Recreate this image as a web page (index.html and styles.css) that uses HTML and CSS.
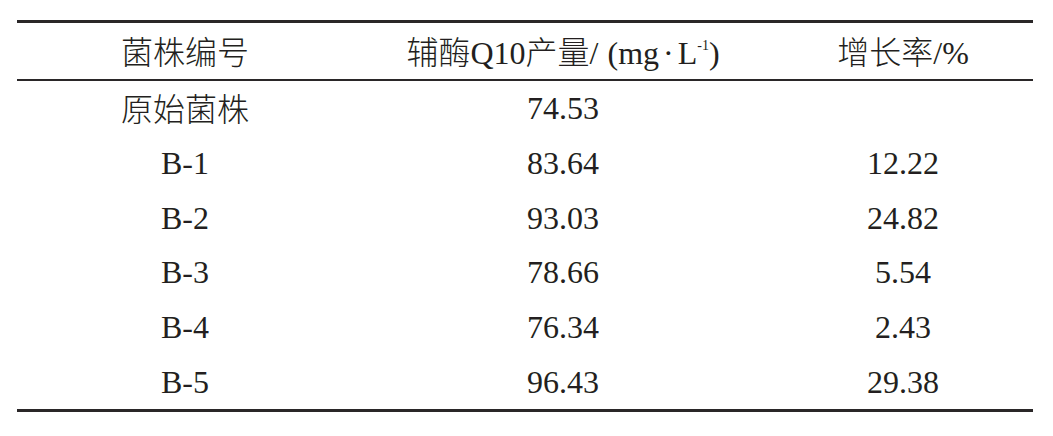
FILE: index.html
```html
<!DOCTYPE html>
<html lang="zh-CN">
<head>
    <meta charset="UTF-8">
    <title>菌株辅酶Q10产量</title>
    <link rel="stylesheet" href="styles.css">
</head>
<body>
    <table class="yield-table">
        <thead>
            <tr>
                <th class="col-strain"><span class="cjk">菌株编号</span></th>
                <th class="col-yield"><span class="cjk">辅酶</span>Q10<span class="cjk">产量</span>/<span class="paren">(</span>mg<span class="dot">·</span>L<sup>-1</sup>)</th>
                <th class="col-rate"><span class="cjk">增长率</span>/%</th>
            </tr>
        </thead>
        <tbody>
            <tr><td><span class="cjk">原始菌株</span></td><td>74.53</td><td></td></tr>
            <tr><td>B-1</td><td>83.64</td><td>12.22</td></tr>
            <tr><td>B-2</td><td>93.03</td><td>24.82</td></tr>
            <tr><td>B-3</td><td>78.66</td><td>5.54</td></tr>
            <tr><td>B-4</td><td>76.34</td><td>2.43</td></tr>
            <tr><td>B-5</td><td>96.43</td><td>29.38</td></tr>
        </tbody>
    </table>
</body>
</html>
```

FILE: styles.css
```css
body {
    margin: 0;
    background: #ffffff;
    font-family: "Liberation Serif", "Noto Sans CJK SC", serif;
    color: #231f20;
}
.yield-table {
    margin: 20px 0 0 17px;
    width: 1016px;
    border-collapse: separate;
    border-spacing: 0;
    border-top: 3px solid #2a2728;
    border-bottom: 3px solid #2a2728;
    table-layout: fixed;
    font-size: 32px;
}
.yield-table th,
.yield-table td {
    padding: 0;
    text-align: center;
    vertical-align: middle;
    font-weight: normal;
    line-height: 1;
}
.yield-table th {
    height: 56px;
    border-bottom: 2px solid #2a2728;
}
.yield-table td {
    height: 54.67px;
}
.cjk {
    font-family: "Noto Sans CJK SC", sans-serif;
    font-weight: 300;
}
.paren {
    margin-left: 9px;
}
.dot {
    margin: 0 4px;
}
.col-strain {
    width: 336px;
}
.col-yield {
    width: 420px;
}
.col-rate {
    width: 260px;
}
.yield-table sup {
    font-size: 14px;
    vertical-align: 14px;
    line-height: 0;
}
```
